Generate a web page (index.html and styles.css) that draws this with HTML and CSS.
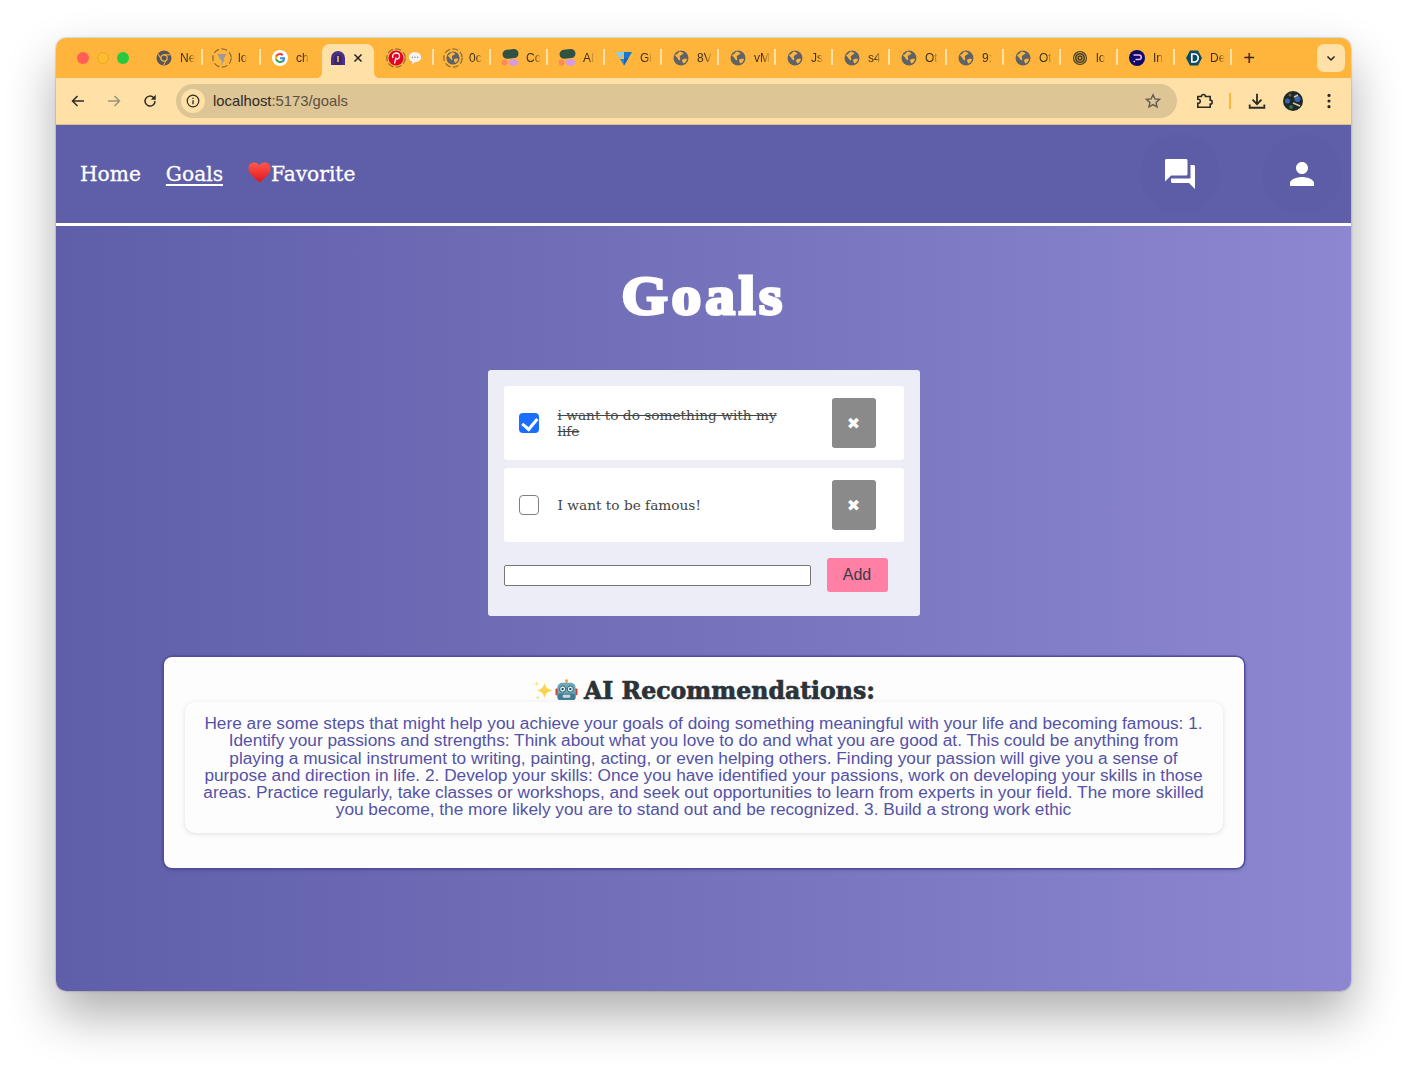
FILE: index.html
```html
<!DOCTYPE html>
<html lang="en">
<head>
  <meta charset="UTF-8">
  <title>Goals</title>
  <link rel="stylesheet" href="styles.css">
</head>
<body>
  <!-- shared favicons -->
  <svg class="sprites" width="0" height="0">
    <symbol id="globe" viewBox="0 0 16 16">
      <circle cx="8" cy="8" r="7.5" fill="#5f6368"/>
      <path d="M2 5c2-.5 3-2 4.500-3.500 2 0 3 1 4 2-1 1.500-2.500 1-3.500 2.500-1 1.500 1 2 0 4-1 1-2-1-3-2.500C3 6.500 2.500 6 2 5zM9 10c1.500-1.500 3.500-1.500 5-1-.5 2-1.500 3.500-3.500 4.500C10 12.500 9 11.500 9 10z" fill="#ffb43c"/>
    </symbol>
    <symbol id="blobs" viewBox="0 0 18 18">
      <rect x="1.500" y="0.500" width="16" height="9" rx="4.500" fill="#2f5242" transform="rotate(-6 9 5)"/>
      <circle cx="3.500" cy="13.500" r="3" fill="#fb8a5a"/>
      <ellipse cx="12.500" cy="13.500" rx="5" ry="3.500" fill="#d79be0"/>
    </symbol>
    <symbol id="ring" viewBox="0 0 20 20">
      <circle cx="10" cy="10" r="9.200" fill="none" stroke="#8a6a35" stroke-width="1.200" stroke-dasharray="6 2.500"/>
    </symbol>
    <symbol id="xmark" viewBox="0 0 10 10">
      <path d="M1.500 1.500l7 7M8.500 1.500l-7 7" stroke="#222" stroke-width="1.500" fill="none"/>
    </symbol>
  </svg>

  <div class="window">
    <div class="tabstrip">
      <div class="lights">
        <span class="light red"></span>
        <span class="light yellow"></span>
        <span class="light green"></span>
      </div>
      <div class="tabs">
        <div class="tab wide">
          <svg class="fav" viewBox="0 0 16 16"><circle cx="8" cy="8" r="7.500" fill="#55575b"/><circle cx="8" cy="8" r="3.200" fill="#55575b" stroke="#ffb43c" stroke-width="1.200"/><path d="M8 4.800h6.500M5.200 9.500L2.300 4M10.800 9.500L7.500 15" stroke="#ffb43c" stroke-width="1"/></svg>
          <span class="label">Ne</span>
        </div>
        <div class="tab wide">
          <span class="fav-wrap big"><svg class="ring-icon" viewBox="0 0 20 20"><use href="#ring"/><path d="M5.500 6h9l-3 5 1 1-3.500 6 1-5-1.500-1z" fill="#9a9a9a"/></svg></span>
          <span class="label">lo</span>
        </div>
        <div class="tab wide">
          <svg class="fav" viewBox="0 0 16 16"><circle cx="8" cy="8" r="8" fill="#fff"/><path d="M13 8.200c0-.4 0-.7-.1-1H8v2h2.800c-.1.700-.5 1.200-1 1.600v1.300h1.700c1-.9 1.500-2.300 1.500-3.900z" fill="#4285f4"/><path d="M8 13c1.400 0 2.600-.5 3.500-1.300l-1.700-1.300c-.5.300-1 .5-1.800.5-1.300 0-2.500-.9-2.900-2.100H3.400v1.300C4.200 11.800 6 13 8 13z" fill="#34a853"/><path d="M5.100 8.800c-.2-.6-.2-1.200 0-1.800V5.700H3.400c-.7 1.400-.7 3 0 4.400z" fill="#fbbc05"/><path d="M8 5.100c.8 0 1.400.3 1.900.8l1.500-1.500C10.500 3.500 9.300 3 8 3 6 3 4.200 4.200 3.400 5.700L5.100 7C5.500 5.900 6.700 5.100 8 5.100z" fill="#ea4335"/></svg>
          <span class="label">ch</span>
        </div>
        <div class="tab wide active">
          <svg class="fav" viewBox="0 0 16 16"><path d="M1 15V8a7 7 0 0 1 14 0v7z" fill="#4b2f86"/><path d="M4 15V8.500a4 4 0 0 1 8 0V15z" fill="#3a2670"/><rect x="7.200" y="6" width="1.600" height="6" fill="#f1c04c"/></svg>
          <svg class="close" viewBox="0 0 10 10"><use href="#xmark"/></svg>
        </div>
        <div class="tab first-after">
          <span class="fav-wrap big"><svg class="ring-icon" viewBox="0 0 20 20"><use href="#ring"/><circle cx="10" cy="10" r="7.500" fill="#e60023"/><path d="M8.500 15.500l1.500-6M7 10c-1.500-3 1-5 3.200-5 2.300 0 3.800 1.500 3.300 3.800-.4 2-2.700 3-4 1.700" stroke="#fff" stroke-width="1.300" fill="none"/></svg></span>
          <svg class="fav small" viewBox="0 0 16 16"><path d="M8 1.500c4 0 7 2.300 7 5.500s-3 5.500-7 5.500l-3.500 2.500.5-3C2.500 11 1 9.200 1 7c0-3.200 3-5.500 7-5.500z" fill="#f4f4f4"/><circle cx="5" cy="7" r=".8" fill="#777"/><circle cx="8" cy="7" r=".8" fill="#777"/><circle cx="11" cy="7" r=".8" fill="#777"/></svg>
        </div>
        <div class="tab">
          <span class="fav-wrap big"><svg class="ring-icon" viewBox="0 0 20 20"><use href="#ring"/><svg x="3" y="3" width="14" height="14"><use href="#globe"/></svg></svg></span>
          <span class="label">0c</span>
        </div>
        <div class="tab">
          <svg class="fav blob" viewBox="0 0 18 18"><use href="#blobs"/></svg>
          <span class="label">Cc</span>
        </div>
        <div class="tab">
          <svg class="fav blob" viewBox="0 0 18 18"><use href="#blobs"/></svg>
          <span class="label">AI</span>
        </div>
        <div class="tab">
          <svg class="fav" viewBox="0 0 16 16"><path d="M0 2h8l-4 7z" fill="#7dd0f5"/><path d="M8 2h8l-3.500 6H8z" fill="#1976d2"/><path d="M4 9h8l-4 6.500z" fill="#1e88e5"/><path d="M8 8h4.500L8 15.500z" fill="#1565c0"/></svg>
          <span class="label">Gi</span>
        </div>
        <div class="tab"><svg class="fav"><use href="#globe"/></svg><span class="label">8V</span></div>
        <div class="tab"><svg class="fav"><use href="#globe"/></svg><span class="label">vM</span></div>
        <div class="tab"><svg class="fav"><use href="#globe"/></svg><span class="label">Js</span></div>
        <div class="tab"><svg class="fav"><use href="#globe"/></svg><span class="label">s4</span></div>
        <div class="tab"><svg class="fav"><use href="#globe"/></svg><span class="label">Ot</span></div>
        <div class="tab"><svg class="fav"><use href="#globe"/></svg><span class="label">9:</span></div>
        <div class="tab"><svg class="fav"><use href="#globe"/></svg><span class="label">Ot</span></div>
        <div class="tab">
          <svg class="fav" viewBox="0 0 16 16"><circle cx="8" cy="8" r="7" fill="#4a3a20"/><circle cx="8" cy="8" r="5.500" fill="none" stroke="#c9a24a"/><circle cx="8" cy="8" r="3.200" fill="none" stroke="#c9a24a"/><circle cx="8" cy="8" r="1.200" fill="#c9a24a"/></svg>
          <span class="label">lo</span>
        </div>
        <div class="tab">
          <svg class="fav" viewBox="0 0 16 16"><circle cx="8" cy="8" r="8" fill="#0d0a6b"/><path d="M4.500 5h5.500a2 2 0 0 1 0 4.500H6.500M6 11.500H4.500" stroke="#f4b6f0" stroke-width="1.500" fill="none"/></svg>
          <span class="label">In</span>
        </div>
        <div class="tab">
          <svg class="fav" viewBox="0 0 16 16"><path d="M4 .500h8L16 8l-4 7.500H4L0 8z" fill="#0b4a63"/><path d="M5.800 4h2.400a4 4 0 0 1 0 8H5.800z" fill="none" stroke="#fff" stroke-width="1.700"/></svg>
          <span class="label">De</span>
        </div>
      </div>
      <span class="new-tab">+</span>
      <div class="tab-search">
        <svg width="12" height="12" viewBox="0 0 12 12"><path d="M2.500 4.500L6 8l3.500-3.500" stroke="#222" stroke-width="1.500" fill="none"/></svg>
      </div>
    </div>

    <div class="toolbar">
      <svg class="tool" viewBox="0 0 16 16"><path d="M14 8H2.500M7.500 3l-5 5 5 5" stroke="#2c2a25" stroke-width="1.500" fill="none"/></svg>
      <svg class="tool" viewBox="0 0 16 16"><path d="M2 8h11.500M8.500 3l5 5-5 5" stroke="#9c927c" stroke-width="1.500" fill="none"/></svg>
      <svg class="tool" viewBox="0 0 16 16"><path d="M13 8a5 5 0 1 1-1.500-3.500L13 6" stroke="#2c2a25" stroke-width="1.500" fill="none"/><path d="M13.700 1.800v4.900H8.800z" fill="#2c2a25"/></svg>
      <div class="omnibox">
        <span class="site-info">
          <svg width="14" height="14" viewBox="0 0 14 14"><circle cx="7" cy="7" r="5.800" fill="none" stroke="#2c2a25" stroke-width="1.200"/><path d="M7 6.200v4M7 3.800v1.300" stroke="#2c2a25" stroke-width="1.300"/></svg>
        </span>
        <span class="url">localhost<span class="url-path">:5173/goals</span></span>
        <svg class="star" viewBox="0 0 16 16"><path d="M8 1.800l1.900 4.100 4.500.5-3.300 3 .9 4.500L8 11.600l-4 2.300.9-4.500-3.300-3 4.500-.5z" fill="none" stroke="#5f5b50" stroke-width="1.400"/></svg>
      </div>
      <div class="tool-right">
        <svg class="tool" viewBox="0 0 16 16"><path d="M2 4.500h3.200a1.800 1.800 0 1 1 3.600 0H13v3.200a1.800 1.800 0 1 1 0 3.600V14H2v-3.500a1.800 1.800 0 1 0 0-3.500z" transform="translate(.5 -.5)" fill="none" stroke="#2c2a25" stroke-width="1.400"/></svg>
        <span class="tool-sep"></span>
        <svg class="tool" viewBox="0 0 16 16"><path d="M8 1.500v9M4 6.800l4 4 4-4M1.500 11v3h13v-3" stroke="#2c2a25" stroke-width="1.600" fill="none"/></svg>
        <svg class="avatar" viewBox="0 0 20 20"><circle cx="10" cy="10" r="10" fill="#1d2a28"/><circle cx="4.500" cy="10" r="2.500" fill="#3c63b8"/><circle cx="14.500" cy="8" r="3" fill="#3c63b8"/><path d="M10 12l7 3M11 6l4-2" stroke="#d8c6b0" stroke-width="1.500"/><circle cx="7" cy="4" r="1.500" fill="#7a5a3a"/><circle cx="8" cy="16" r="2" fill="#3d6b3f"/></svg>
        <svg class="tool" viewBox="0 0 16 16"><circle cx="8" cy="3" r="1.400" fill="#2c2a25"/><circle cx="8" cy="8" r="1.400" fill="#2c2a25"/><circle cx="8" cy="13" r="1.400" fill="#2c2a25"/></svg>
      </div>
    </div>

    <div class="page">
      <nav class="navbar">
        <div class="nav-links">
          <a class="nav-link">Home</a>
          <a class="nav-link current">Goals</a>
          <a class="nav-link fav-link">
            <svg class="heart" viewBox="0 0 24 24"><defs><linearGradient id="heartFill" x1="0" y1="0" x2="0" y2="1"><stop offset="0" stop-color="#ff5a4d"/><stop offset="1" stop-color="#e0141c"/></linearGradient></defs><path d="M12 22.500C5 16.500.5 12.500.5 7.500.5 3.800 3.200 1.500 6.500 1.500c2.300 0 4.300 1.200 5.500 3.300 1.200-2.100 3.200-3.300 5.500-3.300 3.300 0 6 2.300 6 6 0 5-4.500 9-11.500 15z" fill="url(#heartFill)"/></svg>Favorite
          </a>
        </div>
        <div class="nav-icons">
          <span class="icon-btn">
            <svg width="36" height="36" viewBox="0 0 24 24"><path d="M21 6h-2v9H6v2c0 .55.45 1 1 1h11l4 4V7c0-.55-.45-1-1-1zm-4 6V3c0-.55-.45-1-1-1H3c-.55 0-1 .45-1 1v14l4-4h10c.55 0 1-.45 1-1z" fill="#fff"/></svg>
          </span>
          <span class="icon-btn">
            <svg width="36" height="36" viewBox="0 0 24 24"><path d="M12 12c2.210 0 4-1.790 4-4s-1.790-4-4-4-4 1.790-4 4 1.790 4 4 4zm0 2c-2.670 0-8 1.340-8 4v2h16v-2c0-2.660-5.330-4-8-4z" fill="#fff"/></svg>
          </span>
        </div>
      </nav>

      <main class="content">
        <h1 class="page-title">Goals</h1>

        <section class="goal-card">
          <div class="goal-item">
            <input class="goal-check" type="checkbox" checked>
            <span class="goal-text done">i want to do something with my life</span>
            <button class="goal-delete">✖</button>
          </div>
          <div class="goal-item">
            <input class="goal-check" type="checkbox">
            <span class="goal-text">I want to be famous!</span>
            <button class="goal-delete">✖</button>
          </div>
          <div class="goal-add">
            <input class="goal-input" type="text">
            <button class="add-btn">Add</button>
          </div>
        </section>

        <section class="ai-card">
          <h2 class="ai-title">
            <svg class="emoji" viewBox="0 0 24 24"><path d="M13 4c1 5 3 7 9 8-6 1-8 3-9 8-1-5-3-7-8-8 5-1 7-3 8-8z" fill="#fbd34e"/><path d="M5 2c.4 2 1 2.600 3 3-2 .4-2.600 1-3 3-.4-2-1-2.600-3-3 2-.4 2.600-1 3-3zM6 17c.3 1.500.8 2 2.500 2.500C6.800 20 6.300 20.500 6 22c-.3-1.500-.8-2-2.500-2.500C5.200 19 5.700 18.500 6 17z" fill="#fde68a"/></svg><svg class="emoji" viewBox="0 0 24 24"><rect x="11" y="1" width="2" height="3" fill="#e0a030"/><circle cx="12" cy="1.800" r="1.500" fill="#f5a623"/><rect x="0.500" y="10" width="3" height="7" rx="1" fill="#c8443c"/><rect x="20.500" y="10" width="3" height="7" rx="1" fill="#c8443c"/><rect x="2.500" y="4" width="19" height="18" rx="5" fill="#6ea8b8"/><rect x="2.500" y="15" width="19" height="7" rx="3" fill="#3f7d92"/><circle cx="8" cy="10.500" r="3.200" fill="#dff3f7" stroke="#2f5f70"/><circle cx="16" cy="10.500" r="3.200" fill="#dff3f7" stroke="#2f5f70"/><circle cx="8" cy="10.500" r="1.200" fill="#234"/><circle cx="16" cy="10.500" r="1.200" fill="#234"/><rect x="8" y="16.500" width="8" height="3" rx="1" fill="#cfd8dc"/></svg>
            <span class="ai-title-text">AI Recommendations:</span>
          </h2>
          <p class="ai-text">Here are some steps that might help you achieve your goals of doing something meaningful with your life and becoming famous: 1. Identify your passions and strengths: Think about what you love to do and what you are good at. This could be anything from playing a musical instrument to writing, painting, acting, or even helping others. Finding your passion will give you a sense of purpose and direction in life. 2. Develop your skills: Once you have identified your passions, work on developing your skills in those areas. Practice regularly, take classes or workshops, and seek out opportunities to learn from experts in your field. The more skilled you become, the more likely you are to stand out and be recognized. 3. Build a strong work ethic</p>
        </section>
      </main>
    </div>
  </div>
</body>
</html>
```

FILE: styles.css
```css
* {
  box-sizing: border-box;
}
html, body {
  margin: 0;
  height: 100%;
}
body {
  padding: 38px 56px 0;
  background: #fff;
  font-family: "Liberation Sans", Arial, sans-serif;
}
.sprites {
  display: block;
  height: 0;
}
.window {
  width: 1295px;
  height: 953px;
  border-radius: 10px;
  overflow: hidden;
  display: flex;
  flex-direction: column;
  box-shadow: 0 24px 50px rgba(0, 0, 0, 0.32), 0 0 2px rgba(0, 0, 0, 0.4);
}

/* tab strip */
.tabstrip {
  height: 40px;
  flex: none;
  display: flex;
  align-items: flex-end;
  background: #ffb43c;
}
.lights {
  width: 89px;
  height: 40px;
  padding-left: 21px;
  display: flex;
  align-items: center;
  gap: 8px;
  flex: none;
}
.light {
  width: 12px;
  height: 12px;
  border-radius: 50%;
}
.red { background: #ff5f57; }
.yellow { background: #febc2e; border: 1px solid #e8a72a; }
.green { background: #28c840; }
.tabs {
  display: flex;
  height: 34px;
}
.tab {
  position: relative;
  width: 57px;
  height: 34px;
  padding: 0 0 6px 11px;
  display: flex;
  align-items: center;
  gap: 8px;
  font-size: 12px;
  color: #3d3219;
}
.tab.wide { width: 58px; }
.tab::after {
  content: "";
  position: absolute;
  right: 0;
  top: 5px;
  width: 2px;
  height: 16px;
  background: #ffe0a6;
}
.tab.active::after,
.tab:nth-child(3)::after { display: none; }
.tab.active {
  z-index: 0;
  width: 52px;
  margin: 0 3px;
  padding-left: 8px;
  background: #ffe0a6;
  border-radius: 8px 8px 0 0;
}
.tab.active::before {
  content: "";
  position: absolute;
  left: -6px;
  right: -6px;
  bottom: 0;
  height: 6px;
  z-index: -1;
  background:
    radial-gradient(circle at 0 0, #ffb43c 6px, #ffe0a6 6.5px) left / 6px 6px no-repeat,
    radial-gradient(circle at 100% 0, #ffb43c 6px, #ffe0a6 6.5px) right / 6px 6px no-repeat;
}
.fav {
  width: 16px;
  height: 16px;
  flex: none;
}
.fav.small {
  width: 14px;
  height: 14px;
  margin-left: -4px;
}
.fav.blob {
  width: 18px;
  height: 18px;
  margin-left: -1px;
  margin-right: -1px;
}
.fav-wrap.big {
  width: 20px;
  height: 20px;
  margin-left: -2px;
  margin-right: -2px;
  display: block;
  flex: none;
}
.ring-icon {
  display: block;
  width: 20px;
  height: 20px;
}
/* the real tab strip fades the title out on its right edge */
.label {
  white-space: nowrap;
  -webkit-mask-image: linear-gradient(90deg, #000 55%, transparent 100%);
  mask-image: linear-gradient(90deg, #000 55%, transparent 100%);
}
.close {
  width: 10px;
  height: 10px;
  margin-left: -1px;
}
.new-tab {
  width: 20px;
  height: 34px;
  margin-left: 7px;
  line-height: 28px;
  font-size: 20px;
  color: #2c2a25;
  text-align: center;
}
.tab-search {
  width: 28px;
  height: 28px;
  margin: 0 6px 6px auto;
  border-radius: 7px;
  background: #ffe0a6;
  display: flex;
  align-items: center;
  justify-content: center;
}

/* toolbar */
.toolbar {
  height: 47px;
  flex: none;
  padding-left: 14px;
  display: flex;
  align-items: center;
  gap: 20px;
  background: #ffe0a6;
  border-bottom: 1px solid #d9c08e;
}
.tool {
  width: 16px;
  height: 16px;
  flex: none;
}
.omnibox {
  width: 1001px;
  height: 34px;
  margin-left: -2px;
  padding: 0 16px 0 5px;
  display: flex;
  align-items: center;
  border-radius: 17px;
  background: #dec596;
  flex: none;
}
.site-info {
  width: 24px;
  height: 24px;
  border-radius: 50%;
  background: #ffe0a6;
  display: flex;
  align-items: center;
  justify-content: center;
}
.url {
  margin-left: 8px;
  font-size: 14.8px;
  color: #2c2a25;
}
.url-path { color: #5a5040; }
.star {
  width: 16px;
  height: 16px;
  margin-left: auto;
}
.tool-right {
  flex: 1;
  margin-left: -2px;
  display: flex;
  align-items: center;
}
.tool-right .tool {
  width: 18px;
  height: 18px;
}
.tool-sep {
  width: 2px;
  height: 16px;
  margin: 0 17px 0 16px;
  background: #ffb43c;
}
.avatar {
  width: 20px;
  height: 20px;
  margin: 0 17px;
}

/* page */
.page {
  flex: 1;
  display: flex;
  flex-direction: column;
  background: linear-gradient(90deg, #5f5ea8, #8c87d0);
}
.navbar {
  height: 101px;
  flex: none;
  padding: 0 9px 0 24px;
  display: flex;
  align-items: center;
  justify-content: space-between;
  background: #5f5ea8;
  border-bottom: 3px solid #fff;
}
.nav-links {
  display: flex;
  align-items: center;
  gap: 25px;
}
.nav-link {
  display: flex;
  align-items: center;
  font-family: "DejaVu Serif", serif;
  font-size: 20.200px;
  color: #fff;
  -webkit-text-stroke: 0.3px #fff;
}
.nav-link.current {
  text-decoration: underline;
  text-underline-offset: 3px;
}
.heart {
  width: 23px;
  height: 23px;
  margin-top: -4px;
}
.nav-icons {
  display: flex;
  gap: 42px;
}
.icon-btn {
  width: 80px;
  height: 80px;
  border-radius: 50%;
  background: rgba(90, 88, 165, 0.18);
  display: flex;
  align-items: center;
  justify-content: center;
}
.content {
  flex: 1;
  display: flex;
  flex-direction: column;
  align-items: center;
}
.page-title {
  margin: 40px 0 44px;
  height: 60px;
  line-height: 60px;
  font-family: "Liberation Serif", serif;
  font-size: 54px;
  font-weight: 700;
  letter-spacing: 3.500px;
  color: #fff;
  -webkit-text-stroke: 3px #fff;
  transform: scaleX(1.1);
}

/* goals */
.goal-card {
  width: 432px;
  padding: 16px 16px 24px;
  display: flex;
  flex-direction: column;
  gap: 8px;
  border-radius: 3px;
  background: #ecedf7;
}
.goal-item {
  padding: 12px 28px 12px 15px;
  display: flex;
  align-items: center;
  border-radius: 3px;
  background: #fff;
}
.goal-check {
  appearance: none;
  position: relative;
  width: 20px;
  height: 20px;
  margin: 0 19px 0 0;
  flex: none;
  border: 1.500px solid #808080;
  border-radius: 4px;
  background: #fff;
}
.goal-check:checked {
  border: none;
  background: #1a6dff;
}
.goal-check:checked::after {
  content: "";
  position: absolute;
  left: 6.500px;
  top: 2px;
  width: 7px;
  height: 11.500px;
  border: solid #fff;
  border-width: 0 3px 3px 0;
  transform: rotate(40deg);
}
.goal-text {
  flex: 1;
  padding-right: 40px;
  font-family: "DejaVu Serif", serif;
  font-size: 13.700px;
  line-height: 16px;
  color: #444;
}
.goal-text.done { text-decoration: line-through; }
.goal-delete {
  width: 44px;
  height: 50px;
  padding: 0;
  flex: none;
  border: none;
  border-radius: 3px;
  background: #8a8a8a;
  color: #fff;
  font-family: "DejaVu Sans", sans-serif;
  font-size: 16px;
}
.goal-add {
  margin-top: 8px;
  display: flex;
  align-items: center;
  gap: 16px;
}
.goal-input {
  width: 307px;
  height: 21px;
  padding: 0 2px;
  border: 1px solid #767676;
  border-radius: 2px;
  background: #fff;
}
.add-btn {
  width: 61px;
  height: 34px;
  border: none;
  border-radius: 3px;
  background: #ff80a4;
  color: #3c3a48;
  font-family: "Liberation Sans", Arial, sans-serif;
  font-size: 16px;
}

/* ai box */
.ai-card {
  width: 1080px;
  height: 211px;
  margin-top: 41px;
  padding: 22px 21px 0;
  border-radius: 8px;
  background: #fdfdfe;
  box-shadow: 0 0 0 1.500px #4f4d9e, 0 1px 4px rgba(0, 0, 0, 0.3);
}
.ai-title {
  margin: 0;
  height: 23px;
  display: flex;
  align-items: center;
  justify-content: center;
  font-family: "DejaVu Serif", serif;
  font-size: 23.600px;
  font-weight: 700;
  color: #2c3338;
}
.ai-title-text {
  margin-left: 6px;
  -webkit-text-stroke: 0.7px #2c3338;
}
.emoji {
  width: 23px;
  height: 23px;
}
.ai-text {
  margin: 0;
  padding: 13px 16px 14px;
  border-radius: 10px;
  background: #fdfdfe;
  box-shadow: 0 1px 5px rgba(0, 0, 0, 0.12);
  font-size: 17.250px;
  line-height: 17.250px;
  color: #5452a6;
  text-align: center;
}
```
